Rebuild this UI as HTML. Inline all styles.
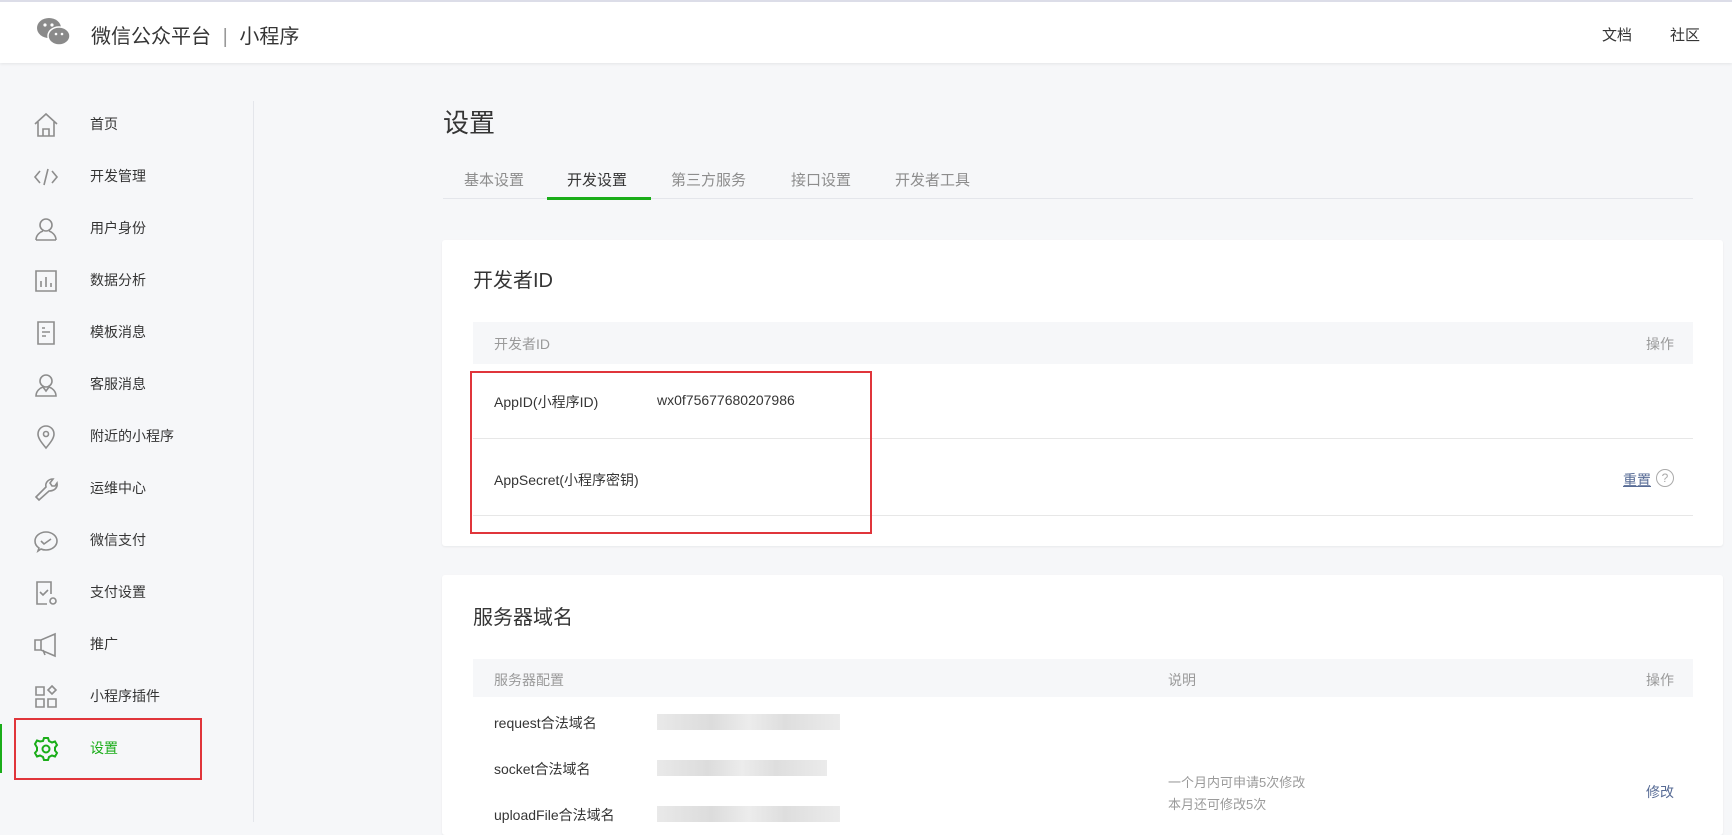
<!DOCTYPE html>
<html><head><meta charset="utf-8"><style>
*{margin:0;padding:0;box-sizing:border-box}
body{width:1732px;height:822px;overflow:hidden;background:#f6f7f9;font-family:"Liberation Sans","Noto Sans CJK SC",sans-serif;color:#353535;position:relative}
.a{position:absolute;white-space:nowrap}
.top{position:absolute;left:0;top:0;width:1732px;height:63px;background:#fff;border-top:2px solid #dcdde8;box-shadow:0 1px 3px rgba(0,0,0,.08)}
.nav{position:absolute;left:0;width:250px;height:52px}
.nav svg{position:absolute;left:33px;top:14px}
.nav span{position:absolute;left:90px;top:16px;font-size:14px;color:#353535}
.card{position:absolute;left:442px;width:1281px;background:#fff;border-radius:3px;box-shadow:0 1px 2px rgba(0,0,0,.06)}
.th{position:absolute;left:473px;width:1220px;background:#f6f7f9}
.g{color:#9a9a9a;font-size:14px}
.blur{position:absolute;left:657px;width:183px;height:16px;background:linear-gradient(90deg,#e9e9e9,#dcdcdc 30%,#ececec 50%,#dedede 70%,#ebebeb)}
</style></head><body>
<div class="top">
<svg class="a" style="left:36px;top:15px" width="36" height="30" viewBox="0 0 36 30"><ellipse cx="13" cy="11" rx="12" ry="10" fill="#8a8a8a"/><ellipse cx="23" cy="19" rx="11" ry="9" fill="#8a8a8a" stroke="#fff" stroke-width="1.5"/><circle cx="9" cy="8" r="1.6" fill="#fff"/><circle cx="16" cy="8" r="1.6" fill="#fff"/><circle cx="20" cy="17" r="1.3" fill="#fff"/><circle cx="26" cy="17" r="1.3" fill="#fff"/></svg>
<div class="a" style="left:91px;top:18px;font-size:20px;color:#353535">微信公众平台 <span style="color:#999;margin:0 6px">|</span> 小程序</div>
<div class="a" style="left:1602px;top:22px;font-size:15px">文档</div>
<div class="a" style="left:1670px;top:22px;font-size:15px">社区</div>
</div>
<div class="a" style="left:253px;top:101px;width:1px;height:721px;background:#e4e6eb"></div>

<div class="nav" style="top:98px"><svg width="26" height="26" viewBox="0 0 26 26" fill="none" stroke="#8d8d8d" stroke-width="1.6"><path d="M2 12L13 2l11 10M5 10v14h16V10M10 24v-7h6v7"/></svg><span>首页</span></div>
<div class="nav" style="top:150px"><svg width="26" height="26" viewBox="0 0 26 26" fill="none" stroke="#8d8d8d" stroke-width="1.6"><path d="M7 7l-5 6 5 6M19 7l5 6-5 6M15 5l-4 16"/></svg><span>开发管理</span></div>
<div class="nav" style="top:202px"><svg width="26" height="26" viewBox="0 0 26 26" fill="none" stroke="#8d8d8d" stroke-width="1.6"><circle cx="13" cy="9" r="6"/><path d="M3 24c0-5 4-8 7-9M23 24c0-5-4-8-7-9M3 24h20"/></svg><span>用户身份</span></div>
<div class="nav" style="top:254px"><svg width="26" height="26" viewBox="0 0 26 26" fill="none" stroke="#8d8d8d" stroke-width="1.6"><path d="M3 3h20v20H3zM8 19v-6M13 19V9M18 19v-4"/></svg><span>数据分析</span></div>
<div class="nav" style="top:306px"><svg width="26" height="26" viewBox="0 0 26 26" fill="none" stroke="#8d8d8d" stroke-width="1.6"><path d="M5 2h16v22H5zM9 8h3M9 12h8M9 16h4"/></svg><span>模板消息</span></div>
<div class="nav" style="top:358px"><svg width="26" height="26" viewBox="0 0 26 26" fill="none" stroke="#8d8d8d" stroke-width="1.6"><circle cx="13" cy="9" r="6"/><path d="M3 24c0-5 4-8 7-9l3 4 3-4c3 1 7 4 7 9z"/></svg><span>客服消息</span></div>
<div class="nav" style="top:410px"><svg width="26" height="26" viewBox="0 0 26 26" fill="none" stroke="#8d8d8d" stroke-width="1.6"><path d="M13 24c-5-6-8-10-8-14a8 8 0 0116 0c0 4-3 8-8 14z"/><circle cx="13" cy="10" r="2.5"/></svg><span>附近的小程序</span></div>
<div class="nav" style="top:462px"><svg width="26" height="26" viewBox="0 0 26 26" fill="none" stroke="#8d8d8d" stroke-width="1.6"><path d="M3 21l10-10c-1-4 2-8 7-8l-3 4 2 3 3 0 2-3c1 5-3 8-8 8L6 24z"/></svg><span>运维中心</span></div>
<div class="nav" style="top:514px"><svg width="26" height="26" viewBox="0 0 26 26" fill="none" stroke="#8d8d8d" stroke-width="1.6"><path d="M6 20c-3-2-4-4-4-7 0-5 5-9 11-9s11 4 11 9-5 9-11 9c-2 0-3 0-5-1l-3 2z"/><path d="M8 13l3 3 7-5"/></svg><span>微信支付</span></div>
<div class="nav" style="top:566px"><svg width="26" height="26" viewBox="0 0 26 26" fill="none" stroke="#8d8d8d" stroke-width="1.6"><path d="M14 24H4V2h14v12M7 12l3 3 5-5"/><circle cx="20" cy="21" r="3"/></svg><span>支付设置</span></div>
<div class="nav" style="top:618px"><svg width="26" height="26" viewBox="0 0 26 26" fill="none" stroke="#8d8d8d" stroke-width="1.6"><path d="M2 8h6l14-6v22L8 18H2zM8 8v10M10 18l2 5"/></svg><span>推广</span></div>
<div class="nav" style="top:670px"><svg width="26" height="26" viewBox="0 0 26 26" fill="none" stroke="#8d8d8d" stroke-width="1.6"><path d="M3 3h8v8H3zM3 15h8v8H3zM15 15h8v8h-8zM19 2l4 4-4 4-4-4z"/></svg><span>小程序插件</span></div>
<div class="a" style="left:0;top:724px;width:2px;height:49px;background:#1aad19"></div>
<div class="nav" style="top:722px"><svg width="26" height="26" viewBox="0 0 26 26" fill="none" stroke="#1aad19" stroke-width="2"><path d="M11 2h4l1 3 3 1.5 3-1 2 3.5-2 2.5v3l2 2.5-2 3.5-3-1L16 21l-1 3h-4l-1-3-3-1.5-3 1-2-3.5 2-2.5v-3L2 8l2-3.5 3 1L10 5z"/><circle cx="13" cy="13" r="3.5"/></svg><span style="color:#1aad19">设置</span></div>
<div class="a" style="left:14px;top:718px;width:188px;height:62px;border:2px solid #e0353b"></div>

<div class="a" style="left:443px;top:103px;font-size:26px;color:#353535">设置</div>
<div class="a" style="left:443px;top:198px;width:1250px;height:1px;background:#e4e6eb"></div>
<div class="a" style="left:464px;top:169px;font-size:15px;color:#8d8d8d">基本设置</div>
<div class="a" style="left:567px;top:169px;font-size:15px;color:#353535">开发设置</div>
<div class="a" style="left:547px;top:197px;width:104px;height:3px;background:#1aad19"></div>
<div class="a" style="left:671px;top:169px;font-size:15px;color:#8d8d8d">第三方服务</div>
<div class="a" style="left:791px;top:169px;font-size:15px;color:#8d8d8d">接口设置</div>
<div class="a" style="left:895px;top:169px;font-size:15px;color:#8d8d8d">开发者工具</div>

<div class="card" style="top:240px;height:306px"></div>
<div class="a" style="left:473px;top:264px;font-size:20px">开发者ID</div>
<div class="th" style="top:322px;height:42px"></div>
<div class="a g" style="left:494px;top:334px">开发者ID</div>
<div class="a g" style="left:1646px;top:334px">操作</div>
<div class="a" style="left:494px;top:392px;font-size:14px">AppID(小程序ID)</div>
<div class="a" style="left:657px;top:392px;font-size:14px">wx0f75677680207986</div>
<div class="a" style="left:473px;top:438px;width:1220px;height:1px;background:#e7e7e7"></div>
<div class="a" style="left:494px;top:470px;font-size:14px">AppSecret(小程序密钥)</div>
<div class="a" style="left:1623px;top:470px;font-size:14px;color:#576b95;text-decoration:underline">重置</div>
<div class="a" style="left:1656px;top:469px;width:18px;height:18px;border:1px solid #aaa;border-radius:50%;font-size:12px;color:#aaa;text-align:center;line-height:16px">?</div>
<div class="a" style="left:473px;top:515px;width:1220px;height:1px;background:#e7e7e7"></div>
<div class="a" style="left:470px;top:371px;width:402px;height:163px;border:2px solid #e0353b"></div>

<div class="card" style="top:575px;height:260px"></div>
<div class="a" style="left:473px;top:601px;font-size:20px">服务器域名</div>
<div class="th" style="top:659px;height:38px"></div>
<div class="a g" style="left:494px;top:670px">服务器配置</div>
<div class="a g" style="left:1168px;top:670px">说明</div>
<div class="a g" style="left:1646px;top:670px">操作</div>
<div class="a" style="left:494px;top:713px;font-size:14px">request合法域名</div>
<div class="blur" style="top:714px"></div>
<div class="a" style="left:494px;top:759px;font-size:14px">socket合法域名</div>
<div class="blur" style="top:760px;width:170px"></div>
<div class="a" style="left:494px;top:805px;font-size:14px">uploadFile合法域名</div>
<div class="blur" style="top:806px"></div>
<div class="a g" style="left:1168px;top:772px;font-size:13px">一个月内可申请5次修改</div>
<div class="a g" style="left:1168px;top:794px;font-size:13px">本月还可修改5次</div>
<div class="a" style="left:1646px;top:782px;font-size:14px;color:#576b95">修改</div>
</body></html>
